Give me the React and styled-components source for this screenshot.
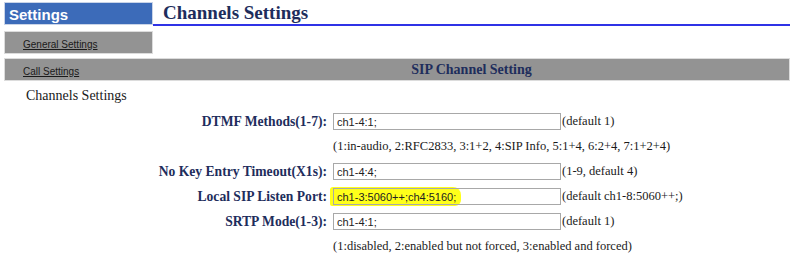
import React from "react"
import styled, { createGlobalStyle } from "styled-components"

const GlobalStyle = createGlobalStyle`
  body {
    margin: 0;
    background: #fff;
  }
`

const navy = "#1e2d5c"
const grey = "#939393"

const Page = styled.div`
  width: 786px;
  margin: 2px 0 0 4px;
  font-family: "Liberation Serif", "Times New Roman", serif;
`

const NavRow = styled.div`
  display: grid;
  grid-template-columns: 149px 1fr;
  margin-top: ${p => p.gap || 0}px;
`

const SideHead = styled.div`
  height: 23px;
  box-sizing: border-box;
  background: #3c6bb9;
  border: 1px solid #c9d4e8;
  color: #fff;
  font: bold 15px "Liberation Sans", Arial, sans-serif;
  padding: 3px 0 0 4px;
`

const TitleCell = styled.div`
  height: 24px;
  box-sizing: border-box;
  border-bottom: 2px solid #2f33e6;
  padding-left: 10px;
`

const Title = styled.h1`
  margin: 0;
  font-size: 19px;
  line-height: 21px;
  font-weight: bold;
  color: ${navy};
`

const NavItem = styled.div`
  display: flex;
  align-items: center;
  height: 23px;
  box-sizing: border-box;
  background: ${grey};
  border: 1px solid #dcdcdc;
  padding: 4px 0 0 18px;
`

const NavLink = styled.a`
  font: 10px/12px "Liberation Sans", Arial, sans-serif;
  color: #1a1a1a;
  text-decoration: underline;
`

const Bar = styled.div`
  display: grid;
  grid-template-columns: 149px 1fr;
  align-items: center;
  height: 23px;
  box-sizing: border-box;
  margin-top: 4px;
  background: ${grey};
  border: 1px solid #dcdcdc;
`

const BarLink = styled.div`
  display: flex;
  padding: 4px 0 0 18px;
`

const BarTitle = styled.div`
  text-align: center;
  font-size: 14px;
  font-weight: bold;
  color: ${navy};
  line-height: 21px;
`

const Section = styled.div`
  margin: 6px 0 0 22px;
  font-size: 14px;
  line-height: 17px;
  color: #1a1a1a;
`

const Form = styled.div`
  display: grid;
  grid-template-columns: 329px 228px 1fr;
  grid-auto-rows: 25px;
  align-items: center;
  margin-top: 5px;
  font-size: 12.5px;
  color: #1a1a1a;
`

const Label = styled.label`
  text-align: right;
  padding-right: 6px;
  font-size: 13.6px;
  font-weight: bold;
  color: ${navy};
`

const Field = styled.div`
  position: relative;
  height: 17px;
`

const Input = styled.input`
  position: relative;
  width: 228px;
  height: 17px;
  box-sizing: border-box;
  margin: 0;
  border: 1px solid #a8a8a8;
  padding: 0 3px;
  background: transparent;
  font: 11px "Liberation Sans", Tahoma, sans-serif;
  color: #222;
  outline: none;
`

const Marker = styled.span`
  position: absolute;
  left: -3px;
  top: -1px;
  width: 131px;
  height: 19px;
  background: #ffff1a;
  border-radius: 3px 8px 6px 2px;
  pointer-events: none;
`

const Hint = styled.span`
  padding-left: 1px;
  white-space: nowrap;
`

const Help = styled.div`
  grid-column: 2 / span 2;
  white-space: nowrap;
`

const rows = [
  {
    label: "DTMF Methods(1-7):",
    value: "ch1-4:1;",
    hint: "(default 1)",
    help: "(1:in-audio, 2:RFC2833, 3:1+2, 4:SIP Info, 5:1+4, 6:2+4, 7:1+2+4)",
  },
  { label: "No Key Entry Timeout(X1s):", value: "ch1-4:4;", hint: "(1-9, default 4)" },
  {
    label: "Local SIP Listen Port:",
    value: "ch1-3:5060++;ch4:5160;",
    hint: "(default ch1-8:5060++;)",
    marked: true,
  },
  {
    label: "SRTP Mode(1-3):",
    value: "ch1-4:1;",
    hint: "(default 1)",
    help: "(1:disabled, 2:enabled but not forced, 3:enabled and forced)",
  },
]

export default function App() {
  return (
    <Page>
      <GlobalStyle />
      <NavRow>
        <SideHead>Settings</SideHead>
        <TitleCell>
          <Title>Channels Settings</Title>
        </TitleCell>
      </NavRow>
      <NavRow gap={5}>
        <NavItem>
          <NavLink href="#general">General Settings</NavLink>
        </NavItem>
        <div />
      </NavRow>
      <Bar>
        <BarLink>
          <NavLink href="#call">Call Settings</NavLink>
        </BarLink>
        <BarTitle>SIP Channel Setting</BarTitle>
      </Bar>
      <Section>Channels Settings</Section>
      <Form>
        {rows.map(r => (
          <React.Fragment key={r.label}>
            <Label>{r.label}</Label>
            <Field>
              {r.marked && <Marker />}
              <Input defaultValue={r.value} />
            </Field>
            <Hint>{r.hint}</Hint>
            {r.help && <Help>{r.help}</Help>}
          </React.Fragment>
        ))}
      </Form>
    </Page>
  )
}
